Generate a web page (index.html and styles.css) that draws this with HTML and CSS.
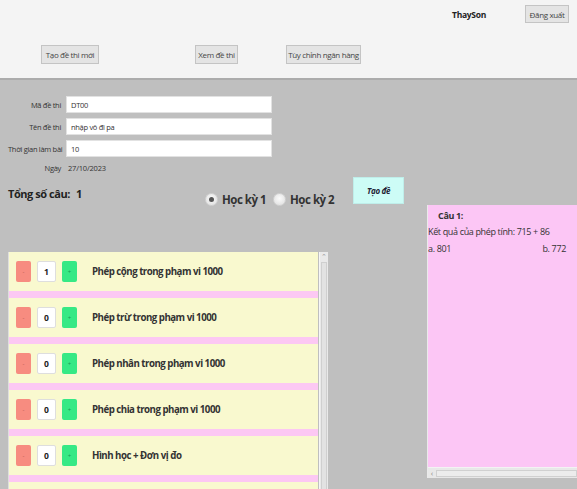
FILE: index.html
```html
<!DOCTYPE html>
<html lang="vi">
<head>
<meta charset="utf-8">
<title>Tạo đề thi</title>
<link rel="stylesheet" href="styles.css">
</head>
<body>
<header class="topbar">
  <div class="userrow">
    <span class="username">ThaySon</span>
    <button class="btn btn-logout">Đăng xuất</button>
  </div>
  <nav class="nav">
    <button class="btn nav-new">Tạo đề thi mới</button>
    <button class="btn nav-view">Xem đề thi</button>
    <button class="btn nav-bank">Tùy chỉnh ngân hàng</button>
  </nav>
</header>
<main class="main">
  <div class="form">
    <label class="flabel">Mã đề thi</label><input class="finput" value="DT00">
    <label class="flabel">Tên đề thi</label><input class="finput" value="nhập vô đi pa">
    <label class="flabel">Thời gian làm bài</label><input class="finput" value="10">
    <span class="flabel">Ngày</span><span class="fdate">27/10/2023</span>
  </div>
  <div class="controls">
    <div class="total">Tổng số câu:<span class="total-num">1</span></div>
    <div class="radios">
      <span class="radio checked"></span><span class="rlabel">Học kỳ 1</span>
      <span class="radio"></span><span class="rlabel">Học kỳ 2</span>
    </div>
    <button class="btn-generate">Tạo đề</button>
  </div>
  <div class="content">
    <div class="list">
      <div class="items">
        <div class="item"><span class="minus">-</span><span class="count">1</span><span class="plus">+</span><span class="iname">Phép cộng trong phạm vi 1000</span></div>
        <div class="sep"></div>
        <div class="item"><span class="minus">-</span><span class="count">0</span><span class="plus">+</span><span class="iname">Phép trừ trong phạm vi 1000</span></div>
        <div class="sep"></div>
        <div class="item"><span class="minus">-</span><span class="count">0</span><span class="plus">+</span><span class="iname">Phép nhân trong phạm vi 1000</span></div>
        <div class="sep"></div>
        <div class="item"><span class="minus">-</span><span class="count">0</span><span class="plus">+</span><span class="iname">Phép chia trong phạm vi 1000</span></div>
        <div class="sep"></div>
        <div class="item"><span class="minus">-</span><span class="count">0</span><span class="plus">+</span><span class="iname">Hình học + Đơn vị đo</span></div>
        <div class="sep"></div>
        <div class="item"></div>
      </div>
      <div class="vscroll">
        <span class="vs-arrow">&#8963;</span>
        <span class="vs-thumb"></span>
      </div>
    </div>
    <div class="preview">
      <div class="pv-body">
        <div class="q-title">Câu 1:</div>
        <div class="q-text">Kết quả của phép tính: 715 + 86</div>
        <div class="q-answers"><span>a. 801</span><span>b. 772</span></div>
      </div>
      <div class="hscroll">
        <span class="hs-arrow">&#8249;</span>
        <span class="hs-thumb"></span>
      </div>
    </div>
  </div>
</main>
</body>
</html>
```

FILE: styles.css
```css
html, body {
  margin: 0;
  padding: 0;
  overflow: hidden;
  height: 489px;
}
body {
  background: #bfbfbf;
  font-family: "Open Sans", "Noto Sans", sans-serif;
  color: #222;
}

/* header */
.topbar {
  background: #f4f4f4;
  height: 78px;
  border-bottom: 2px solid #acacac;
  box-sizing: content-box;
}
.userrow {
  display: flex;
  justify-content: flex-end;
  align-items: center;
  padding: 5px 8px 0 0;
  gap: 39px;
}
.username {
  font-weight: 700;
  font-size: 8.5px;
  letter-spacing: -0.3px;
}
.btn {
  font-family: "Open Sans", sans-serif;
  font-size: 8px;
  letter-spacing: -0.35px;
  color: #444;
  background: #e4e4e4;
  border: 1px solid #c4c4c4;
  border-radius: 0;
  padding: 0;
  height: 18px;
  box-sizing: border-box;
}
.btn-logout { width: 44px; }
.nav {
  display: flex;
  margin-top: 22px;
  padding-left: 41px;
}
.nav-new { width: 58px; height: 19px; }
.nav-view { width: 43px; height: 19px; margin-left: 96px; }
.nav-bank { width: 75px; height: 19px; margin-left: 48px; }

/* main */
.main {
  padding: 16px 0 0 8px;
}
.form {
  display: grid;
  grid-template-columns: 53px 206px;
  grid-template-rows: 17px 17px 17px 12px;
  column-gap: 5px;
  row-gap: 5px;
}
.flabel {
  font-size: 7.5px;
  letter-spacing: -0.3px;
  color: #333;
  text-align: right;
  align-self: center;
  white-space: nowrap;
}
.finput {
  border: 1px solid #e2e2e2;
  background: #fff;
  height: 17px;
  box-sizing: border-box;
  padding: 0 0 0 4px;
  font-family: "Open Sans", sans-serif;
  font-size: 7.5px;
  letter-spacing: -0.3px;
  color: #333;
  outline: none;
}
.fdate {
  font-size: 7.5px;
  letter-spacing: -0.2px;
  color: #333;
  padding-left: 2px;
  align-self: center;
}

.controls {
  display: flex;
  margin-top: 3px;
  height: 28px;
}
.total {
  width: 197px;
  padding-top: 10px;
  font-weight: 700;
  font-size: 11px;
  letter-spacing: -0.45px;
  line-height: 14px;
  color: #222;
}
.total-num { margin-left: 6px; }
.radios {
  display: flex;
  align-items: center;
  margin-top: 15px;
  height: 14px;
}
.radio {
  width: 13px;
  height: 13px;
  border-radius: 50%;
  box-sizing: border-box;
  background: radial-gradient(circle at 50% 40%, #fbfbfb, #dcdcdc);
  border: 1px solid #d2d2d2;
  position: relative;
  margin-right: 4px;
}
.radio.checked::after {
  content: "";
  position: absolute;
  left: 3px;
  top: 3px;
  width: 5px;
  height: 5px;
  border-radius: 50%;
  background: #555;
}
.rlabel {
  font-weight: 700;
  font-size: 11.5px;
  letter-spacing: -0.5px;
  color: #333;
  margin-right: 7px;
}
.btn-generate {
  margin-left: 12px;
  width: 51px;
  height: 27px;
  background: #cdfcf6;
  border: 1px solid #bfeeea;
  font-family: "Open Sans", sans-serif;
  font-style: italic;
  font-weight: 700;
  font-size: 8px;
  letter-spacing: -0.3px;
  color: #223;
  padding: 0;
}

/* content */
.content {
  display: flex;
  align-items: flex-start;
}
.list {
  margin-top: 47px;
  width: 320px;
  height: 240px;
  display: flex;
  border-left: 1px solid #dedede;
  box-sizing: border-box;
  overflow: hidden;
}
.items {
  width: 311px;
  display: flex;
  flex-direction: column;
}
.item {
  height: 39px;
  flex: none;
  background: #f9f9cf;
  display: flex;
  align-items: center;
  padding-left: 7px;
  box-sizing: border-box;
}
.sep {
  height: 7px;
  flex: none;
  background: #fcc8f3;
}
.minus, .plus, .count {
  width: 15px;
  height: 21px;
  border-radius: 2px;
  display: flex;
  align-items: center;
  justify-content: center;
  font-size: 6px;
  box-sizing: border-box;
}
.minus { background: #f78c80; color: #b3554a; }
.plus { background: #36e985; color: #1b9a55; margin-left: 6px; }
.count {
  width: 19px;
  margin-left: 6px;
  background: #fff;
  border: 1px solid #dedede;
  font-weight: 700;
  font-size: 8.5px;
  color: #222;
}
.iname {
  margin-left: 15px;
  font-weight: 700;
  font-size: 9.7px;
  letter-spacing: -0.5px;
  color: #333;
}
.vscroll {
  width: 8px;
  margin-left: 1px;
  background: #e9e9e9;
  border-left: 1px solid #f6f6f6;
  display: flex;
  flex-direction: column;
  align-items: center;
}
.vs-arrow {
  font-size: 7px;
  line-height: 9px;
  height: 10px;
  color: #999;
}
.vs-thumb {
  width: 6px;
  flex: 1;
  background: #e2e2e2;
  border: 1px solid #cfcfcf;
  box-sizing: border-box;
}

.preview {
  margin-left: 99px;
  width: 150px;
  height: 273px;
  display: flex;
  flex-direction: column;
  border-left: 1px solid #eaeaea;
  box-sizing: border-box;
}
.pv-body {
  flex: 1;
  background: #fcc6f5;
  padding-top: 5px;
  font-size: 9px;
  letter-spacing: -0.35px;
  color: #333;
}
.q-title {
  font-weight: 700;
  padding-left: 10px;
  line-height: 11px;
}
.q-text {
  margin-top: 5px;
  line-height: 12px;
}
.q-answers {
  display: flex;
  justify-content: space-between;
  margin-top: 5px;
  padding-right: 11px;
  line-height: 12px;
}
.hscroll {
  height: 10px;
  background: #e8e8e8;
  border-top: 1px solid #f3f3f3;
  display: flex;
  align-items: center;
}
.hs-arrow {
  width: 8px;
  text-align: center;
  font-size: 8px;
  line-height: 8px;
  color: #888;
}
.hs-thumb {
  flex: 1;
  height: 7px;
  background: #ececec;
  border: 1px solid #d0d0d0;
  box-sizing: border-box;
}
```
